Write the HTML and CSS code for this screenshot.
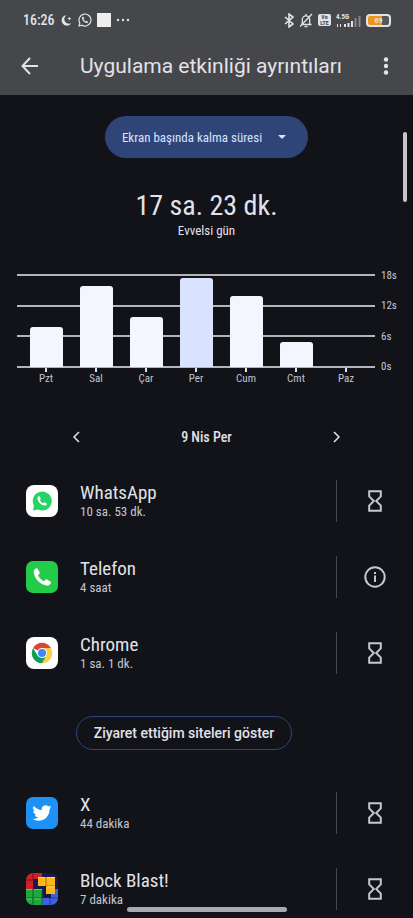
FILE: index.html
```html
<!DOCTYPE html>
<html lang="tr">
<head>
    <meta charset="UTF-8">
    <meta name="viewport" content="width=device-width, initial-scale=1.0">
    <title>Uygulama etkinliği ayrıntıları</title>
    <link rel="stylesheet" href="styles.css">
</head>
<body>
    <svg class="sprite" aria-hidden="true">
        <symbol id="hourglass" viewBox="0 0 14 22">
            <path d="M1.200 1.200h11.600v5.200L8.200 11l4.600 4.600v5.200H1.200v-5.200L5.800 11 1.200 6.400z" fill="none" stroke="currentColor" stroke-width="2"/>
        </symbol>
        <symbol id="phone" viewBox="0 0 24 24">
            <path d="M5.200 2.600C3.600 3.600 2.600 5 3 7.400c1 6.600 7 12.800 13.600 13.800 2.400.4 4-.6 5-2.200.4-.8.2-1.500-.5-2l-3.600-2.200c-.7-.4-1.400-.2-1.900.3l-1.300 1.500C11.500 15.400 8.800 12.700 7.600 10l1.500-1.300c.5-.5.7-1.200.3-1.900L7.200 3.100c-.5-.7-1.200-.9-2-.5z"/>
        </symbol>
    </svg>

    <header class="header">
        <div class="status">
            <span class="clock">16:26</span>
            <svg width="13" height="13" viewBox="0 0 13 13" fill="currentColor"><path d="M6.500 1.200A5.200 5.200 0 1 0 11.300 9 4.300 4.300 0 0 1 6.500 1.200z"/><path d="M9.300 2.600l.6 1.500 1.500.5-1.500.6-.6 1.500-.6-1.500-1.500-.6 1.500-.5z"/></svg>
            <svg width="14" height="14" viewBox="0 0 14 14"><path d="M1 13l.8-3A6 6 0 1 1 4 12.200z" fill="none" stroke="currentColor" stroke-width="1.200"/><use href="#phone" x="3" y="3" width="8" height="8" fill="currentColor"/></svg>
            <span class="square"></span>
            <svg width="14" height="4" viewBox="0 0 14 4" fill="currentColor"><circle cx="2" cy="2" r="1.200"/><circle cx="7" cy="2" r="1.200"/><circle cx="12" cy="2" r="1.200"/></svg>
            <div class="status-right">
                <svg width="10" height="15" viewBox="0 0 10 15" fill="none" stroke="currentColor" stroke-width="1.600"><path d="M1 4l8 7-4 3V1l4 3-8 7"/></svg>
                <svg width="14" height="15" viewBox="0 0 14 15" fill="none" stroke="currentColor" stroke-width="1.300"><path d="M2 11.500h10.500M3.300 11V6.500a3.700 3.700 0 0 1 7.400 0V11M7 1v2M5.500 13.700h3M13 1L1 13.500"/></svg>
                <span class="volte"><span>Vo</span><span>LTE</span></span>
                <div class="signal">
                    <span>4.5G</span>
                    <svg width="25" height="11" viewBox="0 0 25 11" fill="currentColor"><path d="M1 8h1v3H1zM4 8h1v3H4zM8 8h2v3H8zM11.500 7h2v4h-2zM15 5h2v6h-2z"/><path d="M18.500 2h2v9h-2zM22.500 0h2v11h-2z" opacity=".4"/></svg>
                </div>
                <span class="battery"><span>69</span></span>
            </div>
        </div>
        <div class="appbar">
            <button class="icon-button" aria-label="Geri">
                <svg width="18" height="18" viewBox="0 0 18 18" fill="none" stroke="currentColor" stroke-width="2"><path d="M17 9H2M9 1L1.500 9 9 17"/></svg>
            </button>
            <h1>Uygulama etkinliği ayrıntıları</h1>
            <button class="icon-button" aria-label="Diğer seçenekler">
                <svg width="6" height="18" viewBox="0 0 6 18" fill="currentColor"><circle cx="3" cy="2.500" r="2.200"/><circle cx="3" cy="9" r="2.200"/><circle cx="3" cy="15.500" r="2.200"/></svg>
            </button>
        </div>
    </header>

    <main class="content">
        <button class="metric">
            Ekran başında kalma süresi
            <svg width="8" height="4" viewBox="0 0 8 4" fill="currentColor"><path d="M0 0h8L4 4z"/></svg>
        </button>

        <p class="total">17 sa. 23 dk.</p>
        <p class="total-day">Evvelsi gün</p>

        <section class="chart" aria-label="Haftalık ekran süresi">
            <div class="plot">
                <div class="grid-line"><span>18s</span></div>
                <div class="grid-line"><span>12s</span></div>
                <div class="grid-line"><span>6s</span></div>
                <div class="grid-line"><span>0s</span></div>
                <div class="bars">
                    <div class="bar" style="height: 43%"></div>
                    <div class="bar" style="height: 87%"></div>
                    <div class="bar" style="height: 54%"></div>
                    <div class="bar selected" style="height: 96%"></div>
                    <div class="bar" style="height: 76%"></div>
                    <div class="bar" style="height: 27%"></div>
                    <div class="bar" style="height: 0%"></div>
                </div>
            </div>
            <div class="days">
                <span>Pzt</span>
                <span>Sal</span>
                <span>Çar</span>
                <span>Per</span>
                <span>Cum</span>
                <span>Cmt</span>
                <span>Paz</span>
            </div>
        </section>

        <nav class="day-nav">
            <button class="icon-button" aria-label="Önceki gün">
                <svg width="8" height="12" viewBox="0 0 8 12" fill="none" stroke="currentColor" stroke-width="1.500"><path d="M7 1L2 6l5 5"/></svg>
            </button>
            <span>9 Nis Per</span>
            <button class="icon-button" aria-label="Sonraki gün">
                <svg width="8" height="12" viewBox="0 0 8 12" fill="none" stroke="currentColor" stroke-width="1.500"><path d="M1 1l5 5-5 5"/></svg>
            </button>
        </nav>

        <div class="app">
            <svg class="app-icon" viewBox="0 0 32 32"><rect width="32" height="32" rx="8" fill="#fff"/><path d="M7 25.500l1-4.800A9.500 9.500 0 1 1 12 24.500z" fill="#25d366"/><use href="#phone" x="10" y="10" width="12" height="12" fill="#fff"/></svg>
            <div class="app-text">
                <h2>WhatsApp</h2>
                <p>10 sa. 53 dk.</p>
            </div>
            <button class="app-action" aria-label="WhatsApp zamanlayıcısı"><svg width="14" height="22"><use href="#hourglass"/></svg></button>
        </div>
        <div class="app">
            <svg class="app-icon" viewBox="0 0 32 32"><rect width="32" height="32" rx="7" fill="#22cc48"/><use href="#phone" x="5" y="5" width="22" height="22" fill="#fff"/></svg>
            <div class="app-text">
                <h2>Telefon</h2>
                <p>4 saat</p>
            </div>
            <button class="app-action" aria-label="Telefon bilgisi"><svg width="22" height="22" viewBox="0 0 22 22"><circle cx="11" cy="11" r="9.700" fill="none" stroke="currentColor" stroke-width="2"/><path d="M10 9.500h2V16h-2zM10 6h2v2h-2z" fill="currentColor"/></svg></button>
        </div>
        <div class="app">
            <svg class="app-icon" viewBox="0 0 32 32">
                <rect width="32" height="32" rx="8" fill="#fff"/>
                <path d="M16 16L7.100 10.900A10.300 10.300 0 0 1 24.900 10.900z" fill="#db4437"/>
                <path d="M16 16V10.900h8.900A10.300 10.300 0 0 1 16 26.300l4.400-7.700z" fill="#ffcd40"/>
                <path d="M7.100 10.900l4.500 7.700 4.400 2.500 3.600-1.200L16 26.300A10.300 10.300 0 0 1 7.100 10.900z" fill="#0f9d58"/>
                <circle cx="16" cy="16" r="5" fill="#fff"/>
                <circle cx="16" cy="16" r="4" fill="#4285f4"/>
            </svg>
            <div class="app-text">
                <h2>Chrome</h2>
                <p>1 sa. 1 dk.</p>
            </div>
            <button class="app-action" aria-label="Chrome zamanlayıcısı"><svg width="14" height="22"><use href="#hourglass"/></svg></button>
        </div>

        <button class="sites">Ziyaret ettiğim siteleri göster</button>

        <div class="app">
            <svg class="app-icon" viewBox="0 0 32 32"><rect width="32" height="32" rx="7" fill="#1d91f5"/><path transform="translate(6.500 6.500) scale(.79)" d="M23.950 4.570a10 10 0 0 1-2.820.77 4.960 4.960 0 0 0 2.160-2.720c-.95.55-2 .95-3.130 1.180a4.920 4.920 0 0 0-8.380 4.480C7.690 8.100 4.070 6.130 1.640 3.160a4.930 4.930 0 0 0 1.520 6.570 4.900 4.900 0 0 1-2.230-.61v.06a4.930 4.930 0 0 0 3.950 4.830 5 5 0 0 1-2.210.08 4.940 4.940 0 0 0 4.600 3.420A9.870 9.870 0 0 1 0 19.540a14 14 0 0 0 7.550 2.210c9.050 0 14-7.500 14-13.980 0-.21 0-.42-.02-.63a10 10 0 0 0 2.420-2.570z" fill="#fff"/></svg>
            <div class="app-text">
                <h2>X</h2>
                <p>44 dakika</p>
            </div>
            <button class="app-action" aria-label="X zamanlayıcısı"><svg width="14" height="22"><use href="#hourglass"/></svg></button>
        </div>
        <div class="app">
            <svg class="app-icon" viewBox="0 0 32 32">
                <clipPath id="tile"><rect width="32" height="32" rx="7"/></clipPath>
                <g clip-path="url(#tile)">
                    <rect width="32" height="32" fill="#1d1750"/>
                    <path d="M0 0h16v6H7v10H0z" fill="#cf2026"/>
                    <path d="M0 16h16v16H0z" fill="#20a63a"/>
                    <path d="M16 25h9v-9h7v16H16z" fill="#3c62e0"/>
                    <path d="M12 4h17v17h-9v-8h-8z" fill="#fcb817"/>
                    <path d="M0 7h7M7 0v6" stroke="#7d1020" fill="none"/>
                    <path d="M0 25h16M7 16v16M16 16v16" stroke="#0b6a2a" fill="none"/>
                    <path d="M25 25h7M24 25v7" stroke="#233a9c" fill="none"/>
                    <path d="M20 4v9h9" stroke="#b86a0c" fill="none"/>
                    <path d="M12 4.500h7M21 4.500h8M21 13.800h8" stroke="#ffe05a" fill="none"/>
                    <path d="M0 16.500h6M8 16.500h8M0 26h6M8 26h7" stroke="#58d062" fill="none"/>
                </g>
            </svg>
            <div class="app-text">
                <h2>Block Blast!</h2>
                <p>7 dakika</p>
            </div>
            <button class="app-action" aria-label="Block Blast! zamanlayıcısı"><svg width="14" height="22"><use href="#hourglass"/></svg></button>
        </div>
        <div class="scroll-thumb"></div>
    </main>
    <div class="home-bar"></div>
</body>
</html>
```
FILE: styles.css
```css
* {
    box-sizing: border-box;
}

body {
    display: flex;
    flex-direction: column;
    height: 100vh;
    margin: 0;
    overflow: hidden;
    background-color: #111318;
    color: #e2e2e9;
    font-family: "Liberation Sans Narrow", "Roboto Condensed", Roboto, sans-serif;
}

h1, h2, p {
    margin: 0;
    font-weight: normal;
}

button {
    padding: 0;
    border: none;
    background: none;
    color: inherit;
    font-family: inherit;
    cursor: pointer;
}

svg {
    display: block;
    flex-shrink: 0;
}

.sprite {
    position: absolute;
    width: 0;
    height: 0;
}

/* header */
.header {
    flex-shrink: 0;
    background-color: #46474b;
}

.status {
    display: flex;
    align-items: center;
    gap: 5px;
    height: 40px;
    padding: 0 22px 0 23px;
}

.clock {
    font-size: 14px;
    font-weight: 500;
}

.square {
    width: 14px;
    height: 14px;
    background-color: #eeeeee;
}

.status-right {
    display: flex;
    align-items: center;
    gap: 5px;
    margin-left: auto;
}

.volte {
    display: flex;
    flex-direction: column;
    width: 13px;
    height: 12px;
    border-radius: 2px;
    background-color: #e2e2e9;
    color: #46474b;
    font-size: 6px;
    font-weight: bold;
    line-height: 6px;
    text-align: center;
}

.signal {
    display: grid;
    width: 25px;
    height: 13px;
    align-items: end;
}

.signal > * {
    grid-area: 1 / 1;
}

.signal span {
    align-self: start;
    font-size: 7px;
    font-weight: bold;
    line-height: 7px;
}

.battery {
    width: 25px;
    height: 13px;
    border: 2px solid #e2e2e9;
    border-radius: 4px;
    background: linear-gradient(to right, #e8961e 69%, #55565a 69%);
    font-size: 8px;
    font-weight: bold;
    line-height: 9px;
    text-align: center;
}

.appbar {
    display: flex;
    align-items: center;
    height: 55px;
    padding: 0 9px 4px 12px;
}

.icon-button {
    display: flex;
    align-items: center;
    justify-content: center;
    width: 36px;
    height: 36px;
}

.appbar h1 {
    flex: 1;
    margin-left: 32px;
    font-family: Roboto, sans-serif;
    font-size: 21px;
    line-height: 28px;
    white-space: nowrap;
}

/* content */
.content {
    position: relative;
    display: flex;
    flex: 1;
    flex-direction: column;
    min-height: 0;
    padding-top: 21px;
    overflow: hidden;
}

.content > * {
    flex-shrink: 0;
}

.metric {
    display: flex;
    align-items: center;
    align-self: center;
    gap: 16px;
    height: 42px;
    padding: 0 22px 0 17px;
    border-radius: 21px;
    background-color: #2f4578;
    color: #d9e2ff;
    font-size: 13px;
}

.total {
    margin-top: 30px;
    font-size: 28px;
    line-height: 36px;
    text-align: center;
}

.total-day {
    font-size: 13px;
    line-height: 14px;
    text-align: center;
}

.chart {
    margin-top: 36px;
    padding: 0 38px 0 17px;
    color: #c5c6d0;
    font-size: 11px;
}

.plot {
    position: relative;
    display: flex;
    flex-direction: column;
    justify-content: space-between;
    height: 94px;
}

.grid-line {
    display: flex;
    align-items: center;
    height: 2px;
    background-color: #b4b5b8;
}

.grid-line span {
    margin-left: calc(100% + 6px);
}

.bars {
    position: absolute;
    inset: 0 4px 1px 4px;
    display: grid;
    grid-template-columns: repeat(7, 1fr);
    align-items: end;
    justify-items: center;
}

.bar {
    width: 66%;
    border-radius: 3px 3px 0 0;
    background-color: #f4f6ff;
}

.bar.selected {
    background-color: #d9e2ff;
}

.days {
    display: grid;
    grid-template-columns: repeat(7, 1fr);
    padding: 0 4px;
    line-height: 14px;
    text-align: center;
}

.days span::before {
    content: "";
    display: block;
    width: 2px;
    height: 4px;
    margin: 0 auto;
    background-color: #e2e2e9;
}

.day-nav {
    display: flex;
    align-items: center;
    justify-content: space-between;
    margin-top: 33px;
    padding: 0 58px;
    font-size: 14px;
    font-weight: 500;
}

/* app list */
.app {
    display: flex;
    align-items: center;
    height: 76px;
    padding-left: 26px;
}

.day-nav + .app {
    margin-top: 8px;
}

.app-icon {
    width: 32px;
    height: 32px;
}

.app-text {
    flex: 1;
    margin-left: 22px;
}

.app-text h2 {
    font-size: 19px;
    line-height: 22px;
}

.app-text p {
    color: #c5c6d0;
    font-size: 13px;
    line-height: 16px;
}

.app-action {
    display: flex;
    align-items: center;
    justify-content: center;
    width: 77px;
    height: 42px;
    border-left: 1px solid #45464f;
    color: #c5c6d0;
}

.sites {
    align-self: center;
    height: 34px;
    margin: 25px 45px 25px 0;
    padding: 0 17px;
    border: 1px solid #2f4578;
    border-radius: 17px;
    font-family: Roboto, sans-serif;
    font-size: 14px;
    font-weight: 500;
}

.scroll-thumb {
    position: absolute;
    top: 37px;
    right: 6px;
    width: 4px;
    height: 70px;
    border-radius: 2px;
    background-color: #c4c5c9;
}

.home-bar {
    position: fixed;
    bottom: 6px;
    left: 50%;
    width: 160px;
    height: 5px;
    border-radius: 3px;
    background-color: #a9aaad;
    transform: translateX(-50%);
}
```
